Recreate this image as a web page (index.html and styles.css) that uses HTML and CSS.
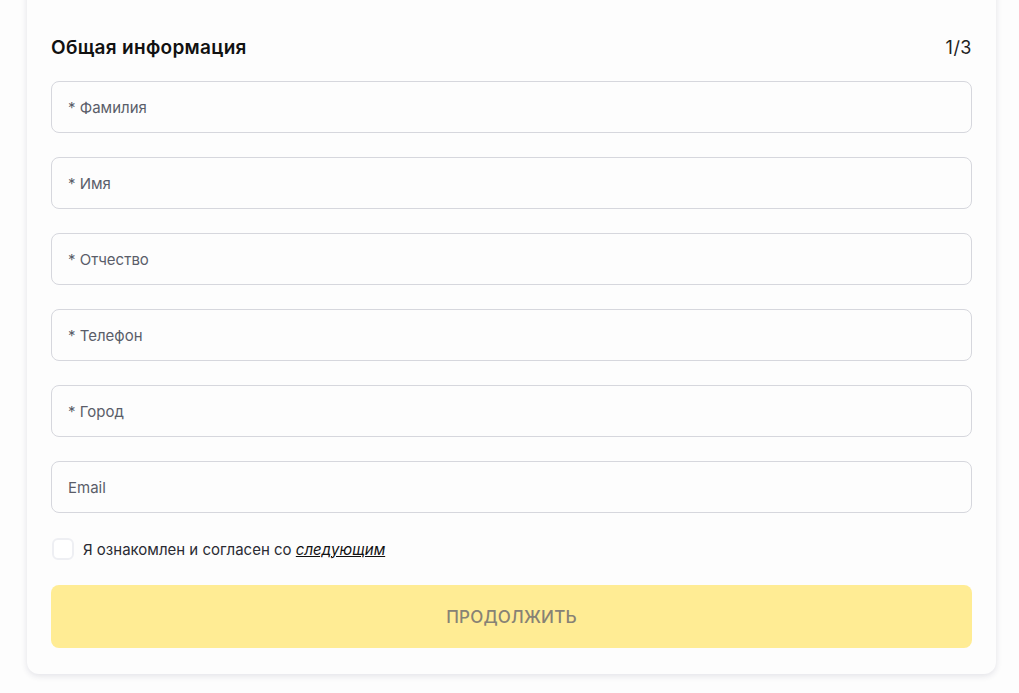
FILE: index.html
```html
<!DOCTYPE html>
<html lang="ru">
<head>
<meta charset="utf-8">
<title>Общая информация</title>
<link rel="stylesheet" href="styles.css">
</head>
<body>
<div class="page">
  <form class="card">
    <div class="head">
      <h2 class="title">Общая информация</h2>
      <span class="step">1/3</span>
    </div>
    <div class="fields">
      <input class="field" type="text" placeholder="* Фамилия">
      <input class="field" type="text" placeholder="* Имя">
      <input class="field" type="text" placeholder="* Отчество">
      <input class="field" type="text" placeholder="* Телефон">
      <input class="field" type="text" placeholder="* Город">
      <input class="field" type="text" placeholder="Email">
    </div>
    <label class="agree">
      <span class="box"></span>
      <span class="agree-text">Я ознакомлен и согласен со <a class="link" href="#">следующим</a></span>
    </label>
    <button class="submit" type="button">ПРОДОЛЖИТЬ</button>
  </form>
</div>
</body>
</html>
```
FILE: styles.css
```css
* { box-sizing: border-box; }
html, body { margin: 0; padding: 0; }
body {
  background: #fdfdfd;
  font-family: Inter, "Noto Sans", "Liberation Sans", sans-serif;
  color: #111;
  height: 693px;
  overflow: hidden;
}
.page {
  padding: 0 23px 0 27px;
}
.card {
  margin-top: -20px;
  width: 969px;
  background: #fdfdfd;
  border-radius: 12px;
  box-shadow: 0 2px 6px rgba(30, 30, 70, 0.12);
  padding: 50px 24px 26px;
  display: flex;
  flex-direction: column;
}
.head {
  display: flex;
  justify-content: space-between;
  align-items: center;
  height: 34px;
  margin-bottom: 17px;
}
.title {
  margin: 0;
  font-size: 19px;
  font-weight: 600;
  letter-spacing: 0.3px;
  color: #111;
}
.step {
  font-size: 18px;
  font-weight: 400;
  letter-spacing: 0.5px;
  color: #222;
}
.fields {
  display: flex;
  flex-direction: column;
  gap: 24px;
}
.field {
  height: 52px;
  width: 100%;
  border: 1px solid #d6d7dd;
  border-radius: 8px;
  background: #fdfdfd;
  padding: 0 16px;
  font-family: inherit;
  font-size: 15px;
  color: #222;
  outline: none;
}
.field::placeholder {
  color: #5a5d69;
}
.agree {
  display: flex;
  align-items: center;
  gap: 9px;
  margin-top: 25px;
  height: 22px;
  padding-left: 1px;
}
.box {
  width: 22px;
  height: 22px;
  border: 2px solid #eeeff3;
  border-radius: 6px;
  background: #fff;
  flex: none;
}
.agree-text {
  font-size: 15px;
  color: #2a2b33;
  letter-spacing: 0;
}
.link {
  color: #111;
  font-style: italic;
  text-decoration: underline;
}
.submit {
  margin-top: 25px;
  height: 63px;
  width: 100%;
  border: none;
  border-radius: 8px;
  background: #ffec94;
  color: #878275;
  font-family: inherit;
  font-size: 17px;
  font-weight: 500;
  letter-spacing: 0.2px;
}
```
